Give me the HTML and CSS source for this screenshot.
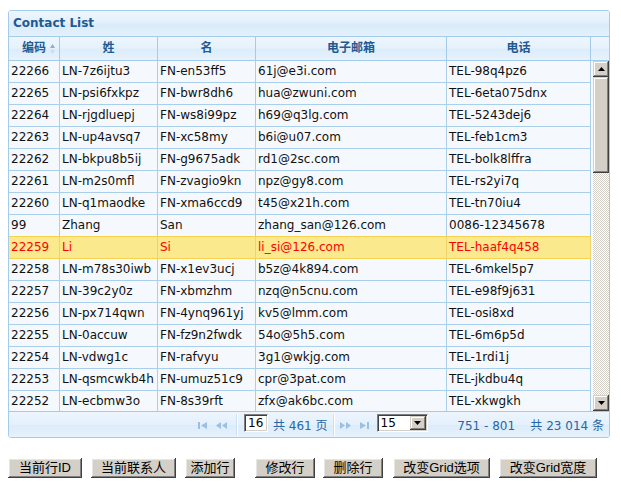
FILE: index.html
```html
<!DOCTYPE html>
<html>
<head>
<meta charset="utf-8">
<link rel="stylesheet" href="styles.css">
</head>
<body>
<div class="panel">
  <div class="title">Contact List</div>
  <div class="head">
    <div class="hc">编码<svg class="sort" width="5" height="10" viewBox="0 0 5 10"><polygon points="2.5,0 5,4 0,4" fill="#8eaccc"/><polygon points="0,6 5,6 2.5,10" fill="#c9dbee"/></svg></div>
    <div class="hc">姓</div>
    <div class="hc">名</div>
    <div class="hc">电子邮箱</div>
    <div class="hc">电话</div>
    <div class="hc hlast"></div>
  </div>
  <div class="bodywrap">
    <div class="rows">
      <div class="row"><div class="c">22266</div><div class="c">LN-7z6ijtu3</div><div class="c">FN-en53ff5</div><div class="c">61j@e3i.com</div><div class="c">TEL-98q4pz6</div></div>
      <div class="row"><div class="c">22265</div><div class="c">LN-psi6fxkpz</div><div class="c">FN-bwr8dh6</div><div class="c">hua@zwuni.com</div><div class="c">TEL-6eta075dnx</div></div>
      <div class="row"><div class="c">22264</div><div class="c">LN-rjgdluepj</div><div class="c">FN-ws8i99pz</div><div class="c">h69@q3lg.com</div><div class="c">TEL-5243dej6</div></div>
      <div class="row"><div class="c">22263</div><div class="c">LN-up4avsq7</div><div class="c">FN-xc58my</div><div class="c">b6i@u07.com</div><div class="c">TEL-feb1cm3</div></div>
      <div class="row"><div class="c">22262</div><div class="c">LN-bkpu8b5ij</div><div class="c">FN-g9675adk</div><div class="c">rd1@2sc.com</div><div class="c">TEL-bolk8lffra</div></div>
      <div class="row"><div class="c">22261</div><div class="c">LN-m2s0mfl</div><div class="c">FN-zvagio9kn</div><div class="c">npz@gy8.com</div><div class="c">TEL-rs2yi7q</div></div>
      <div class="row"><div class="c">22260</div><div class="c">LN-q1maodke</div><div class="c">FN-xma6ccd9</div><div class="c">t45@x21h.com</div><div class="c">TEL-tn70iu4</div></div>
      <div class="row"><div class="c">99</div><div class="c">Zhang</div><div class="c">San</div><div class="c">zhang_san@126.com</div><div class="c">0086-12345678</div></div>
      <div class="row sel"><div class="c">22259</div><div class="c">Li</div><div class="c">Si</div><div class="c">li_si@126.com</div><div class="c">TEL-haaf4q458</div></div>
      <div class="row"><div class="c">22258</div><div class="c">LN-m78s30iwb</div><div class="c">FN-x1ev3ucj</div><div class="c">b5z@4k894.com</div><div class="c">TEL-6mkel5p7</div></div>
      <div class="row"><div class="c">22257</div><div class="c">LN-39c2y0z</div><div class="c">FN-xbmzhm</div><div class="c">nzq@n5cnu.com</div><div class="c">TEL-e98f9j631</div></div>
      <div class="row"><div class="c">22256</div><div class="c">LN-px714qwn</div><div class="c">FN-4ynq961yj</div><div class="c">kv5@lmm.com</div><div class="c">TEL-osi8xd</div></div>
      <div class="row"><div class="c">22255</div><div class="c">LN-0accuw</div><div class="c">FN-fz9n2fwdk</div><div class="c">54o@5h5.com</div><div class="c">TEL-6m6p5d</div></div>
      <div class="row"><div class="c">22254</div><div class="c">LN-vdwg1c</div><div class="c">FN-rafvyu</div><div class="c">3g1@wkjg.com</div><div class="c">TEL-1rdi1j</div></div>
      <div class="row"><div class="c">22253</div><div class="c">LN-qsmcwkb4h</div><div class="c">FN-umuz51c9</div><div class="c">cpr@3pat.com</div><div class="c">TEL-jkdbu4q</div></div>
      <div class="row"><div class="c">22252</div><div class="c">LN-ecbmw3o</div><div class="c">FN-8s39rft</div><div class="c">zfx@ak6bc.com</div><div class="c">TEL-xkwgkh</div></div>
    </div>
    <div class="sgap"></div>
    <div class="vscroll">
      <div class="sbtn"><svg width="7" height="4" viewBox="0 0 7 4"><polygon points="3.5,0 7,4 0,4" fill="#000"/></svg></div>
      <div class="thumb"></div>
      <div class="track"></div>
      <div class="sbtn"><svg width="7" height="4" viewBox="0 0 7 4"><polygon points="0,0 7,0 3.5,4" fill="#000"/></svg></div>
    </div>
  </div>
  <div class="pager">
    <div class="pcenter">
      <svg class="pi" width="9" height="7" viewBox="0 0 9 7"><rect x="0" y="0" width="2" height="7" fill="#9dbfe2"/><polygon points="9,0 9,7 3,3.5" fill="#9dbfe2"/></svg>
      <svg class="pi pi2" width="11" height="7" viewBox="0 0 11 7"><polygon points="5,0 5,7 0,3.5" fill="#9dbfe2"/><polygon points="11,0 11,7 6,3.5" fill="#9dbfe2"/></svg>
      <div class="psep"></div>
      <div class="pinput">16</div>
      <span class="ptext">共 461 页</span>
      <div class="psep psep2"></div>
      <svg class="pi pi3" width="11" height="7" viewBox="0 0 11 7"><polygon points="0,0 0,7 5,3.5" fill="#9dbfe2"/><polygon points="6,0 6,7 11,3.5" fill="#9dbfe2"/></svg>
      <svg class="pi pi4" width="9" height="7" viewBox="0 0 9 7"><polygon points="0,0 0,7 6,3.5" fill="#9dbfe2"/><rect x="7" y="0" width="2" height="7" fill="#9dbfe2"/></svg>
      <div class="pselect"><span class="pval">15</span><span class="pdrop"><svg width="7" height="4" viewBox="0 0 7 4"><polygon points="0,0 7,0 3.5,4" fill="#000"/></svg></span></div>
    </div>
    <div class="pinfo">751 - 801    共 23 014 条</div>
  </div>
</div>
<div class="buttons">
  <button class="btn w1">当前行ID</button>
  <button class="btn w2">当前联系人</button>
  <button class="btn w3">添加行</button>
  <button class="btn w4">修改行</button>
  <button class="btn w5">删除行</button>
  <button class="btn w6">改变Grid选项</button>
  <button class="btn w7">改变Grid宽度</button>
</div>
</body>
</html>
```

FILE: styles.css
```css
html, body {
  margin: 0;
  padding: 0;
  background: #fff;
}
body {
  padding: 10px 8px 0 8px;
  font-family: "DejaVu Sans", "Noto Sans CJK SC", sans-serif;
  font-size: 12px;
  color: #000;
}
.panel {
  width: 602px;
  box-sizing: border-box;
  border: 1px solid #a3cbea;
  border-radius: 3px;
  overflow: hidden;
}
.title {
  height: 25px;
  line-height: 25px;
  padding-left: 4px;
  font-weight: bold;
  color: #1f5a92;
  background: linear-gradient(#eef6fd, #e3f0fc 45%, #d9ebfa 55%, #e4f1fc);
  border-bottom: 1px solid #a3cbea;
}
.head {
  display: grid;
  grid-template-columns: 51px 98px 98px 191px 144px 18px;
  height: 23px;
  border-bottom: 1px solid #a3cbea;
  background: linear-gradient(#eef6fd, #e6f2fc 45%, #dcedfb 55%, #e7f2fc);
}
.hc {
  position: relative;
  box-sizing: border-box;
  border-right: 1px solid #a3cbea;
  text-align: center;
  line-height: 22px;
  font-weight: bold;
  color: #1f5a92;
}
.hc.hlast {
  border-right: none;
}
.sort {
  position: absolute;
  left: 41px;
  top: 7px;
}
.bodywrap {
  display: flex;
  height: 350px;
  overflow: hidden;
  background: #f5f9fe;
}
.rows {
  width: 582px;
  flex: none;
}
.row {
  display: grid;
  grid-template-columns: 51px 98px 98px 191px 144px;
  height: 22px;
  box-sizing: border-box;
  border-bottom: 1px solid #a9cfeb;
}
.c {
  box-sizing: border-box;
  border-right: 1px solid #a9cfeb;
  padding-left: 2px;
  line-height: 21px;
  white-space: nowrap;
  overflow: hidden;
  color: #111;
}
.row.sel {
  background: #fbe98e;
  border-top: 1px solid #f6d250;
  border-bottom-color: #f6d250;
  margin-top: -1px;
  height: 23px;
}
.row.sel .c {
  color: #ff0000;
  border-right-color: #f1d36a;
}
.sgap {
  width: 2px;
  flex: none;
}
.vscroll {
  width: 16px;
  flex: none;
  display: flex;
  flex-direction: column;
}
.sbtn, .thumb {
  background: #d4d0c8;
  box-shadow: inset -1px -1px #404040, inset 1px 1px #d4d0c8, inset -2px -2px #808080, inset 2px 2px #fff;
}
.sbtn {
  height: 16px;
  flex: none;
  display: flex;
  align-items: center;
  justify-content: center;
}
.thumb {
  height: 96px;
  flex: none;
}
.track {
  flex: 1;
  background: repeating-conic-gradient(#fff 0 25%, #d4d0c8 0 50%) 0 0 / 2px 2px;
}
.pager {
  height: 25px;
  border-top: 1px solid #a3cbea;
  background: linear-gradient(#edf5fd, #e4f0fc 50%, #dcecfa 51%, #e6f2fc);
  display: flex;
  align-items: center;
  color: #2766a6;
}
.pcenter {
  display: flex;
  align-items: center;
  margin-left: 189px;
}
.pi {
  flex: none;
  margin-top: 1px;
}
.pi2 {
  margin-left: 9px;
}
.psep {
  width: 1px;
  height: 22px;
  margin-left: 9px;
  background: #cbdff2;
  border-right: 1px solid #fff;
}
.pinput {
  margin-left: 6px;
  width: 24px;
  height: 18px;
  box-sizing: border-box;
  background: #fff;
  color: #000;
  border-top: 1px solid #808080;
  border-left: 1px solid #808080;
  border-right: 1px solid #fff;
  border-bottom: 1px solid #fff;
  box-shadow: inset 1px 1px #404040, inset -1px -1px #d4d0c8;
  padding-left: 3px;
  line-height: 16px;
  margin-top: -3px;
}
.ptext {
  margin-left: 5px;
  font-size: 12px;
}
.psep2 {
  margin-left: 5px;
}
.pi3 {
  margin-left: 5px;
}
.pi4 {
  margin-left: 9px;
}
.pselect {
  margin-left: 8px;
  width: 51px;
  height: 18px;
  box-sizing: border-box;
  background: #fff;
  color: #000;
  border-top: 1px solid #808080;
  border-left: 1px solid #808080;
  border-right: 1px solid #fff;
  border-bottom: 1px solid #fff;
  box-shadow: inset 1px 1px #404040, inset -1px -1px #d4d0c8;
  display: flex;
  align-items: center;
  padding: 1px 1px 1px 3px;
  margin-top: -3px;
}
.pval {
  flex: 1;
  line-height: 14px;
}
.pdrop {
  width: 16px;
  height: 14px;
  background: #d4d0c8;
  box-shadow: inset -1px -1px #404040, inset 1px 1px #d4d0c8, inset -2px -2px #808080, inset 2px 2px #fff;
  display: flex;
  align-items: center;
  justify-content: center;
}
.pinfo {
  margin-left: auto;
  padding-right: 5px;
  white-space: pre;
}
.buttons {
  display: flex;
  margin-top: 20px;
}
.btn {
  height: 20px;
  padding: 0;
  margin: 0 9px 0 0;
  font-family: "Liberation Sans", "Noto Sans CJK SC", sans-serif;
  font-size: 13px;
  color: #000;
  background: #d4d0c8;
  border: none;
  box-shadow: inset -1px -1px #404040, inset 1px 1px #fff, inset -2px -2px #808080, inset 2px 2px #e8e6e1;
  line-height: 20px;
  text-align: center;
}
.w1 { width: 74px; }
.w2 { width: 85px; }
.w3 { width: 50px; margin-right: 20px; }
.w4 { width: 60px; margin-right: 8px; }
.w5 { width: 60px; margin-right: 10px; }
.w6 { width: 97px; }
.w7 { width: 98px; }
```
